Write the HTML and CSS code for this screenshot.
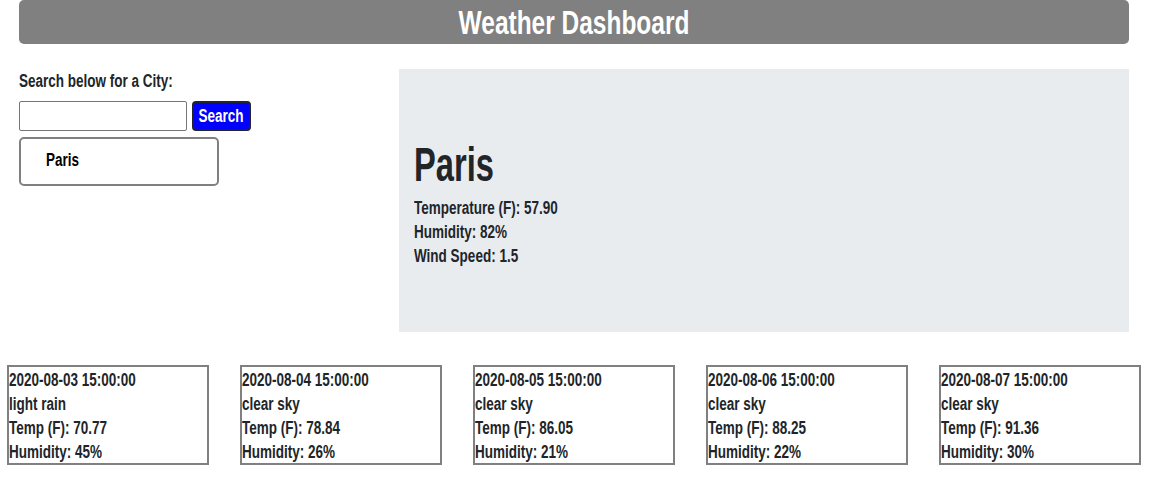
FILE: index.html
```html
<!DOCTYPE html>
<html lang="en">
<head>
<meta charset="utf-8">
<title>Weather Dashboard</title>
<link rel="stylesheet" href="styles.css">
</head>
<body>
<header class="topbar">
  <h1 class="title">Weather Dashboard</h1>
</header>
<main class="main">
  <section class="sidebar">
    <p class="label">Search below for a City:</p>
    <div class="search-row">
      <input class="search-input" type="text">
      <button class="search-btn" type="button"><span class="btn-text">Search</span></button>
    </div>
    <ul class="history">
      <li class="history-item"><span class="history-text">Paris</span></li>
    </ul>
  </section>
  <section class="current">
    <h2 class="city">Paris</h2>
    <p class="stat">Temperature (F): 57.90</p>
    <p class="stat">Humidity: 82%</p>
    <p class="stat">Wind Speed: 1.5</p>
  </section>
</main>
<section class="forecast">
  <div class="card">
    <p class="card-line">2020-08-03 15:00:00</p>
    <p class="card-line">light rain</p>
    <p class="card-line">Temp (F): 70.77</p>
    <p class="card-line">Humidity: 45%</p>
  </div>
  <div class="card">
    <p class="card-line">2020-08-04 15:00:00</p>
    <p class="card-line">clear sky</p>
    <p class="card-line">Temp (F): 78.84</p>
    <p class="card-line">Humidity: 26%</p>
  </div>
  <div class="card">
    <p class="card-line">2020-08-05 15:00:00</p>
    <p class="card-line">clear sky</p>
    <p class="card-line">Temp (F): 86.05</p>
    <p class="card-line">Humidity: 21%</p>
  </div>
  <div class="card">
    <p class="card-line">2020-08-06 15:00:00</p>
    <p class="card-line">clear sky</p>
    <p class="card-line">Temp (F): 88.25</p>
    <p class="card-line">Humidity: 22%</p>
  </div>
  <div class="card">
    <p class="card-line">2020-08-07 15:00:00</p>
    <p class="card-line">clear sky</p>
    <p class="card-line">Temp (F): 91.36</p>
    <p class="card-line">Humidity: 30%</p>
  </div>
</section>
</body>
</html>
```
FILE: styles.css
```css
* {
  box-sizing: border-box;
}

body {
  margin: 0;
  background: #ffffff;
  color: #212529;
  font-family: "Liberation Sans", Arial, sans-serif;
  font-weight: bold;
  font-size: 18px;
  line-height: 24px;
}

.label,
.stat,
.card-line {
  transform: scaleX(0.75);
  transform-origin: left center;
}

.topbar {
  width: 1110px;
  height: 44px;
  margin-left: 19px;
  background: #808080;
  border-radius: 5px;
}

.title {
  margin: 0;
  font-size: 34px;
  line-height: 44px;
  text-align: center;
  color: #ffffff;
  font-weight: bold;
  transform: scaleX(0.72);
  transform-origin: center center;
}

.main {
  display: flex;
  width: 1110px;
  margin: 25px 0 0 19px;
}

.sidebar {
  width: 380px;
  flex: none;
}

.label {
  margin: 0 0 8px;
}

.search-row {
  display: flex;
  gap: 5px;
}

.search-input {
  width: 168px;
  height: 30px;
  border: 1px solid #767676;
  border-radius: 2px;
  padding: 1px 4px;
  font: inherit;
}

.search-btn {
  width: 59px;
  height: 30px;
  padding: 0;
  background: #0000ff;
  color: #ffffff;
  border: 2px solid #23232f;
  border-radius: 4px;
  font: inherit;
  font-weight: bold;
  display: flex;
  align-items: center;
  justify-content: center;
}

.btn-text {
  display: inline-block;
  transform: scaleX(0.75);
  transform-origin: center center;
}

.history {
  list-style: none;
  margin: 6px 0 0;
  padding: 0;
}

.history-item {
  width: 200px;
  height: 49px;
  border: 2px solid #808080;
  border-radius: 5px;
  padding-left: 25px;
  line-height: 42px;
  color: #000000;
}

.history-text {
  display: inline-block;
  transform: scaleX(0.75);
  transform-origin: left center;
}

.current {
  flex: 1;
  height: 263px;
  background: #e9ecef;
  padding: 70px 15px 0;
}

.city {
  margin: 0 0 5px;
  font-size: 48px;
  line-height: 52px;
  font-weight: bold;
  transform: scaleX(0.68);
  transform-origin: left center;
}

.stat {
  margin: 0;
}

.forecast {
  display: flex;
  gap: 31px;
  margin: 33px 0 0 7px;
}

.card {
  width: 202px;
  height: 100px;
  border: 2px solid #808080;
  padding: 1px 0 0 0;
}

.card-line {
  margin: 0;
}
```
